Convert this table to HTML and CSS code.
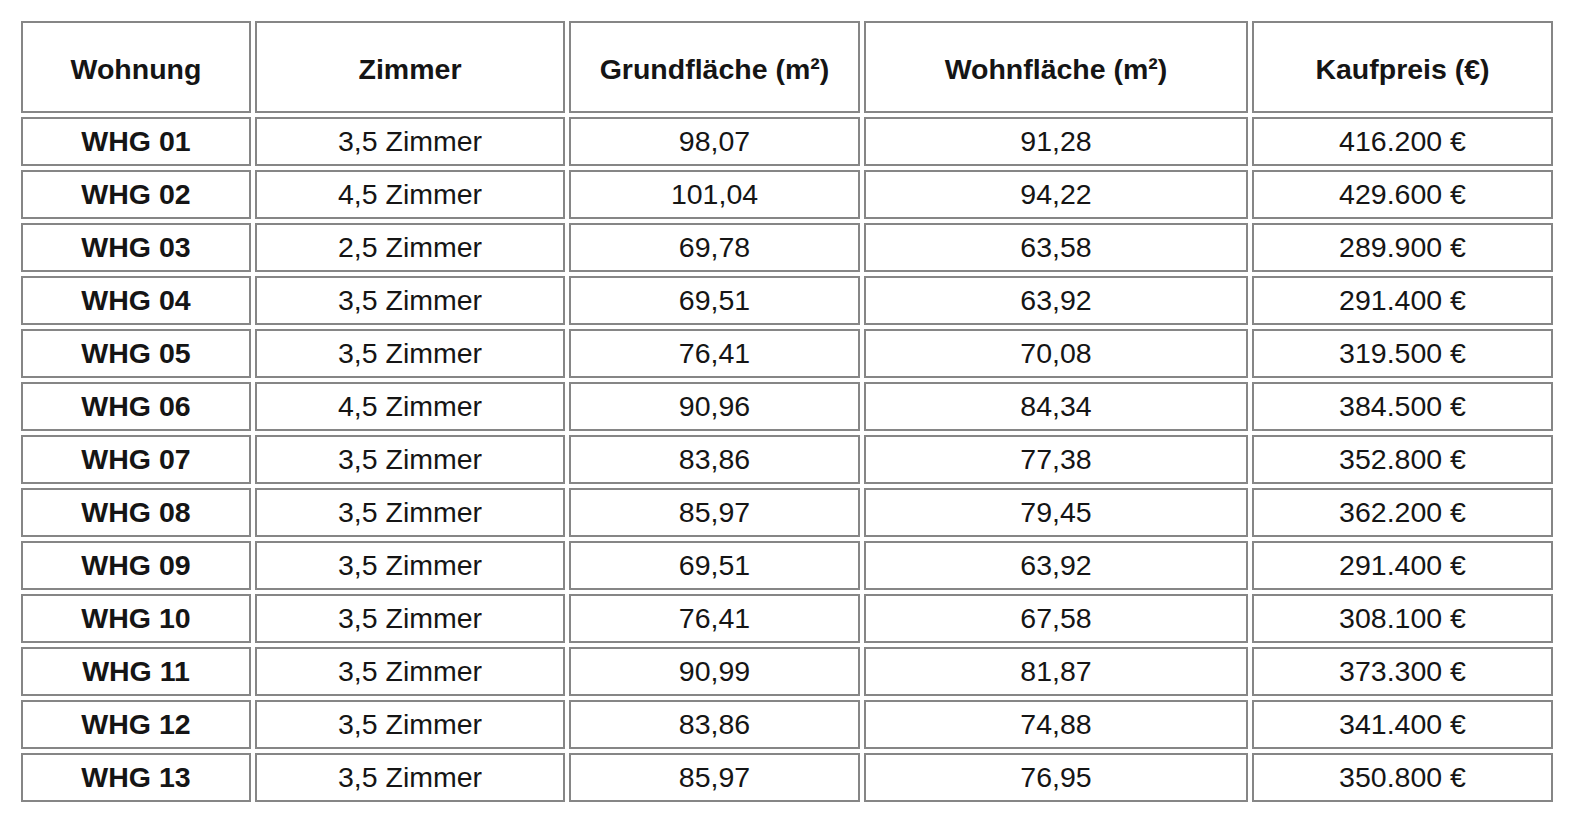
FILE: index.html
```html
<!DOCTYPE html>
<html lang="de">
<head>
<meta charset="utf-8">
<title>Wohnungen</title>
<link rel="stylesheet" href="styles.css">
</head>
<body>
<div class="page">
<table class="units">
<colgroup>
<col class="c1"><col class="c2"><col class="c3"><col class="c4"><col class="c5">
</colgroup>
<thead>
<tr><th>Wohnung</th><th>Zimmer</th><th>Grundfläche (m²)</th><th>Wohnfläche (m²)</th><th>Kaufpreis (€)</th></tr>
</thead>
<tbody>
<tr><td class="name">WHG 01</td><td>3,5 Zimmer</td><td>98,07</td><td>91,28</td><td>416.200 €</td></tr>
<tr><td class="name">WHG 02</td><td>4,5 Zimmer</td><td>101,04</td><td>94,22</td><td>429.600 €</td></tr>
<tr><td class="name">WHG 03</td><td>2,5 Zimmer</td><td>69,78</td><td>63,58</td><td>289.900 €</td></tr>
<tr><td class="name">WHG 04</td><td>3,5 Zimmer</td><td>69,51</td><td>63,92</td><td>291.400 €</td></tr>
<tr><td class="name">WHG 05</td><td>3,5 Zimmer</td><td>76,41</td><td>70,08</td><td>319.500 €</td></tr>
<tr><td class="name">WHG 06</td><td>4,5 Zimmer</td><td>90,96</td><td>84,34</td><td>384.500 €</td></tr>
<tr><td class="name">WHG 07</td><td>3,5 Zimmer</td><td>83,86</td><td>77,38</td><td>352.800 €</td></tr>
<tr><td class="name">WHG 08</td><td>3,5 Zimmer</td><td>85,97</td><td>79,45</td><td>362.200 €</td></tr>
<tr><td class="name">WHG 09</td><td>3,5 Zimmer</td><td>69,51</td><td>63,92</td><td>291.400 €</td></tr>
<tr><td class="name">WHG 10</td><td>3,5 Zimmer</td><td>76,41</td><td>67,58</td><td>308.100 €</td></tr>
<tr><td class="name">WHG 11</td><td>3,5 Zimmer</td><td>90,99</td><td>81,87</td><td>373.300 €</td></tr>
<tr><td class="name">WHG 12</td><td>3,5 Zimmer</td><td>83,86</td><td>74,88</td><td>341.400 €</td></tr>
<tr><td class="name">WHG 13</td><td>3,5 Zimmer</td><td>85,97</td><td>76,95</td><td>350.800 €</td></tr>
</tbody>
</table>
</div>
</body>
</html>
```
FILE: styles.css
```css
* { box-sizing: border-box; }
html, body { margin: 0; padding: 0; background: #fff; }
body {
  font-family: "Liberation Sans", Arial, sans-serif;
  color: #151515;
}
.page { padding: 17px; }
.units {
  border-collapse: separate;
  border-spacing: 4px;
  table-layout: fixed;
  width: 1540px;
  font-size: 28.5px;
}
.c1 { width: 230px; }
.c2 { width: 310px; }
.c3 { width: 291px; }
.c4 { width: 384px; }
.c5 { width: 301px; }
.units th, .units td {
  border: 2px solid #868686;
  text-align: center;
  vertical-align: middle;
  padding: 0;
  white-space: nowrap;
}
.units th {
  height: 92px;
  font-weight: bold;
  padding-top: 4px;
}
.units td { height: 49px; font-weight: normal; }
.units td.name { font-weight: bold; }
```
